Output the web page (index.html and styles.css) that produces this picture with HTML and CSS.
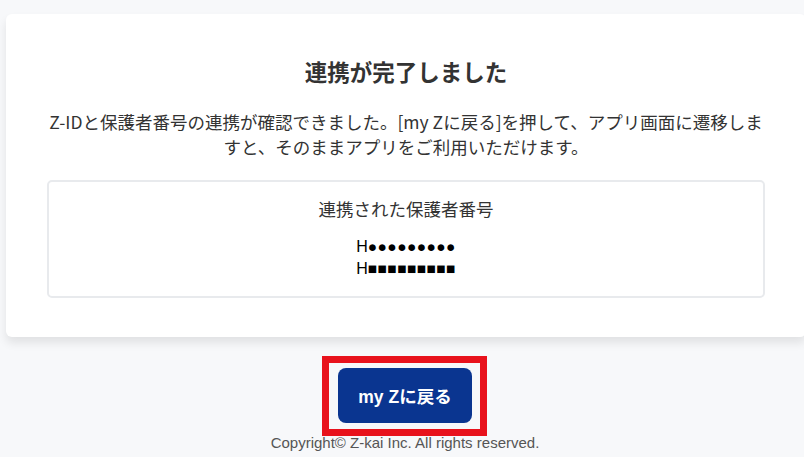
FILE: index.html
```html
<!DOCTYPE html>
<html lang="ja">
<head>
<meta charset="utf-8">
<title>連携が完了しました</title>
<link rel="stylesheet" href="styles.css">
</head>
<body>
<main class="page">
  <section class="card">
    <h1 class="title">連携が完了しました</h1>
    <p class="message">Z-IDと保護者番号の連携が確認できました。[my Zに戻る]を押して、アプリ画面に遷移しますと、そのままアプリをご利用いただけます。</p>
    <div class="info">
      <p class="info-label">連携された保護者番号</p>
      <div class="numbers">
        <div class="num">H<span class="mask">●●●●●●●●●</span></div>
        <div class="num">H<span class="mask">■■■■■■■■■</span></div>
      </div>
    </div>
  </section>
  <div class="actions">
    <div class="btn-wrap">
      <a class="btn" href="#">my Zに戻る</a>
      <span class="highlight"></span>
    </div>
  </div>
  <footer class="footer">Copyright© Z-kai Inc. All rights reserved.</footer>
</main>
</body>
</html>
```

FILE: styles.css
```css
html, body {
  margin: 0;
  padding: 0;
  background: #f7f8fa;
  overflow: hidden;
}
body {
  font-family: "Noto Sans CJK JP", "Liberation Sans", sans-serif;
  color: #333;
}
.page {
  width: 804px;
  height: 457px;
}
.card {
  box-sizing: border-box;
  width: 800px;
  margin: 14px 0 0 6px;
  padding: 40px 41px 39px 41px;
  background: #fff;
  border-radius: 6px;
  box-shadow: 0 6px 10px rgba(0, 0, 0, 0.09);
}
.title {
  margin: 0;
  font-size: 22.5px;
  line-height: 34px;
  font-weight: 700;
  text-align: center;
  color: #333;
}
.message {
  margin: 21px 0 0;
  font-size: 17.5px;
  line-height: 25px;
  text-align: center;
  color: #333;
}
.info {
  margin-top: 21px;
  border: 2px solid #e8eaed;
  border-radius: 5px;
  padding: 15px 0 16px;
  text-align: center;
}
.info-label {
  margin: 0;
  font-size: 17.5px;
  line-height: 24px;
  color: #333;
}
.numbers {
  margin-top: 15px;
}
.num {
  font-family: "Liberation Sans", "DejaVu Sans", sans-serif;
  font-size: 16px;
  line-height: 22px;
  color: #000;
}
.mask {
  font-size: 15.5px;
  letter-spacing: 0.4px;
}
.actions {
  display: flex;
  justify-content: center;
  margin-top: 31px;
}
.btn-wrap {
  position: relative;
  display: inline-block;
  margin-left: 6px;
}
.btn {
  display: flex;
  align-items: center;
  justify-content: center;
  width: 134px;
  height: 55px;
  background: #0a3590;
  border-radius: 8px;
  color: #fff;
  text-decoration: none;
  font-family: "Liberation Sans", "Noto Sans CJK JP", sans-serif;
  font-weight: 700;
  font-size: 17.5px;
}
.highlight {
  position: absolute;
  left: -16px;
  top: -12px;
  right: -15px;
  bottom: -13px;
  border: 7px solid #e8121c;
  pointer-events: none;
}
.footer {
  margin-top: 11px;
  text-align: center;
  padding-left: 6px;
  font-family: "Liberation Sans", Arial, sans-serif;
  font-size: 15px;
  line-height: 18px;
  color: #555;
}
```
